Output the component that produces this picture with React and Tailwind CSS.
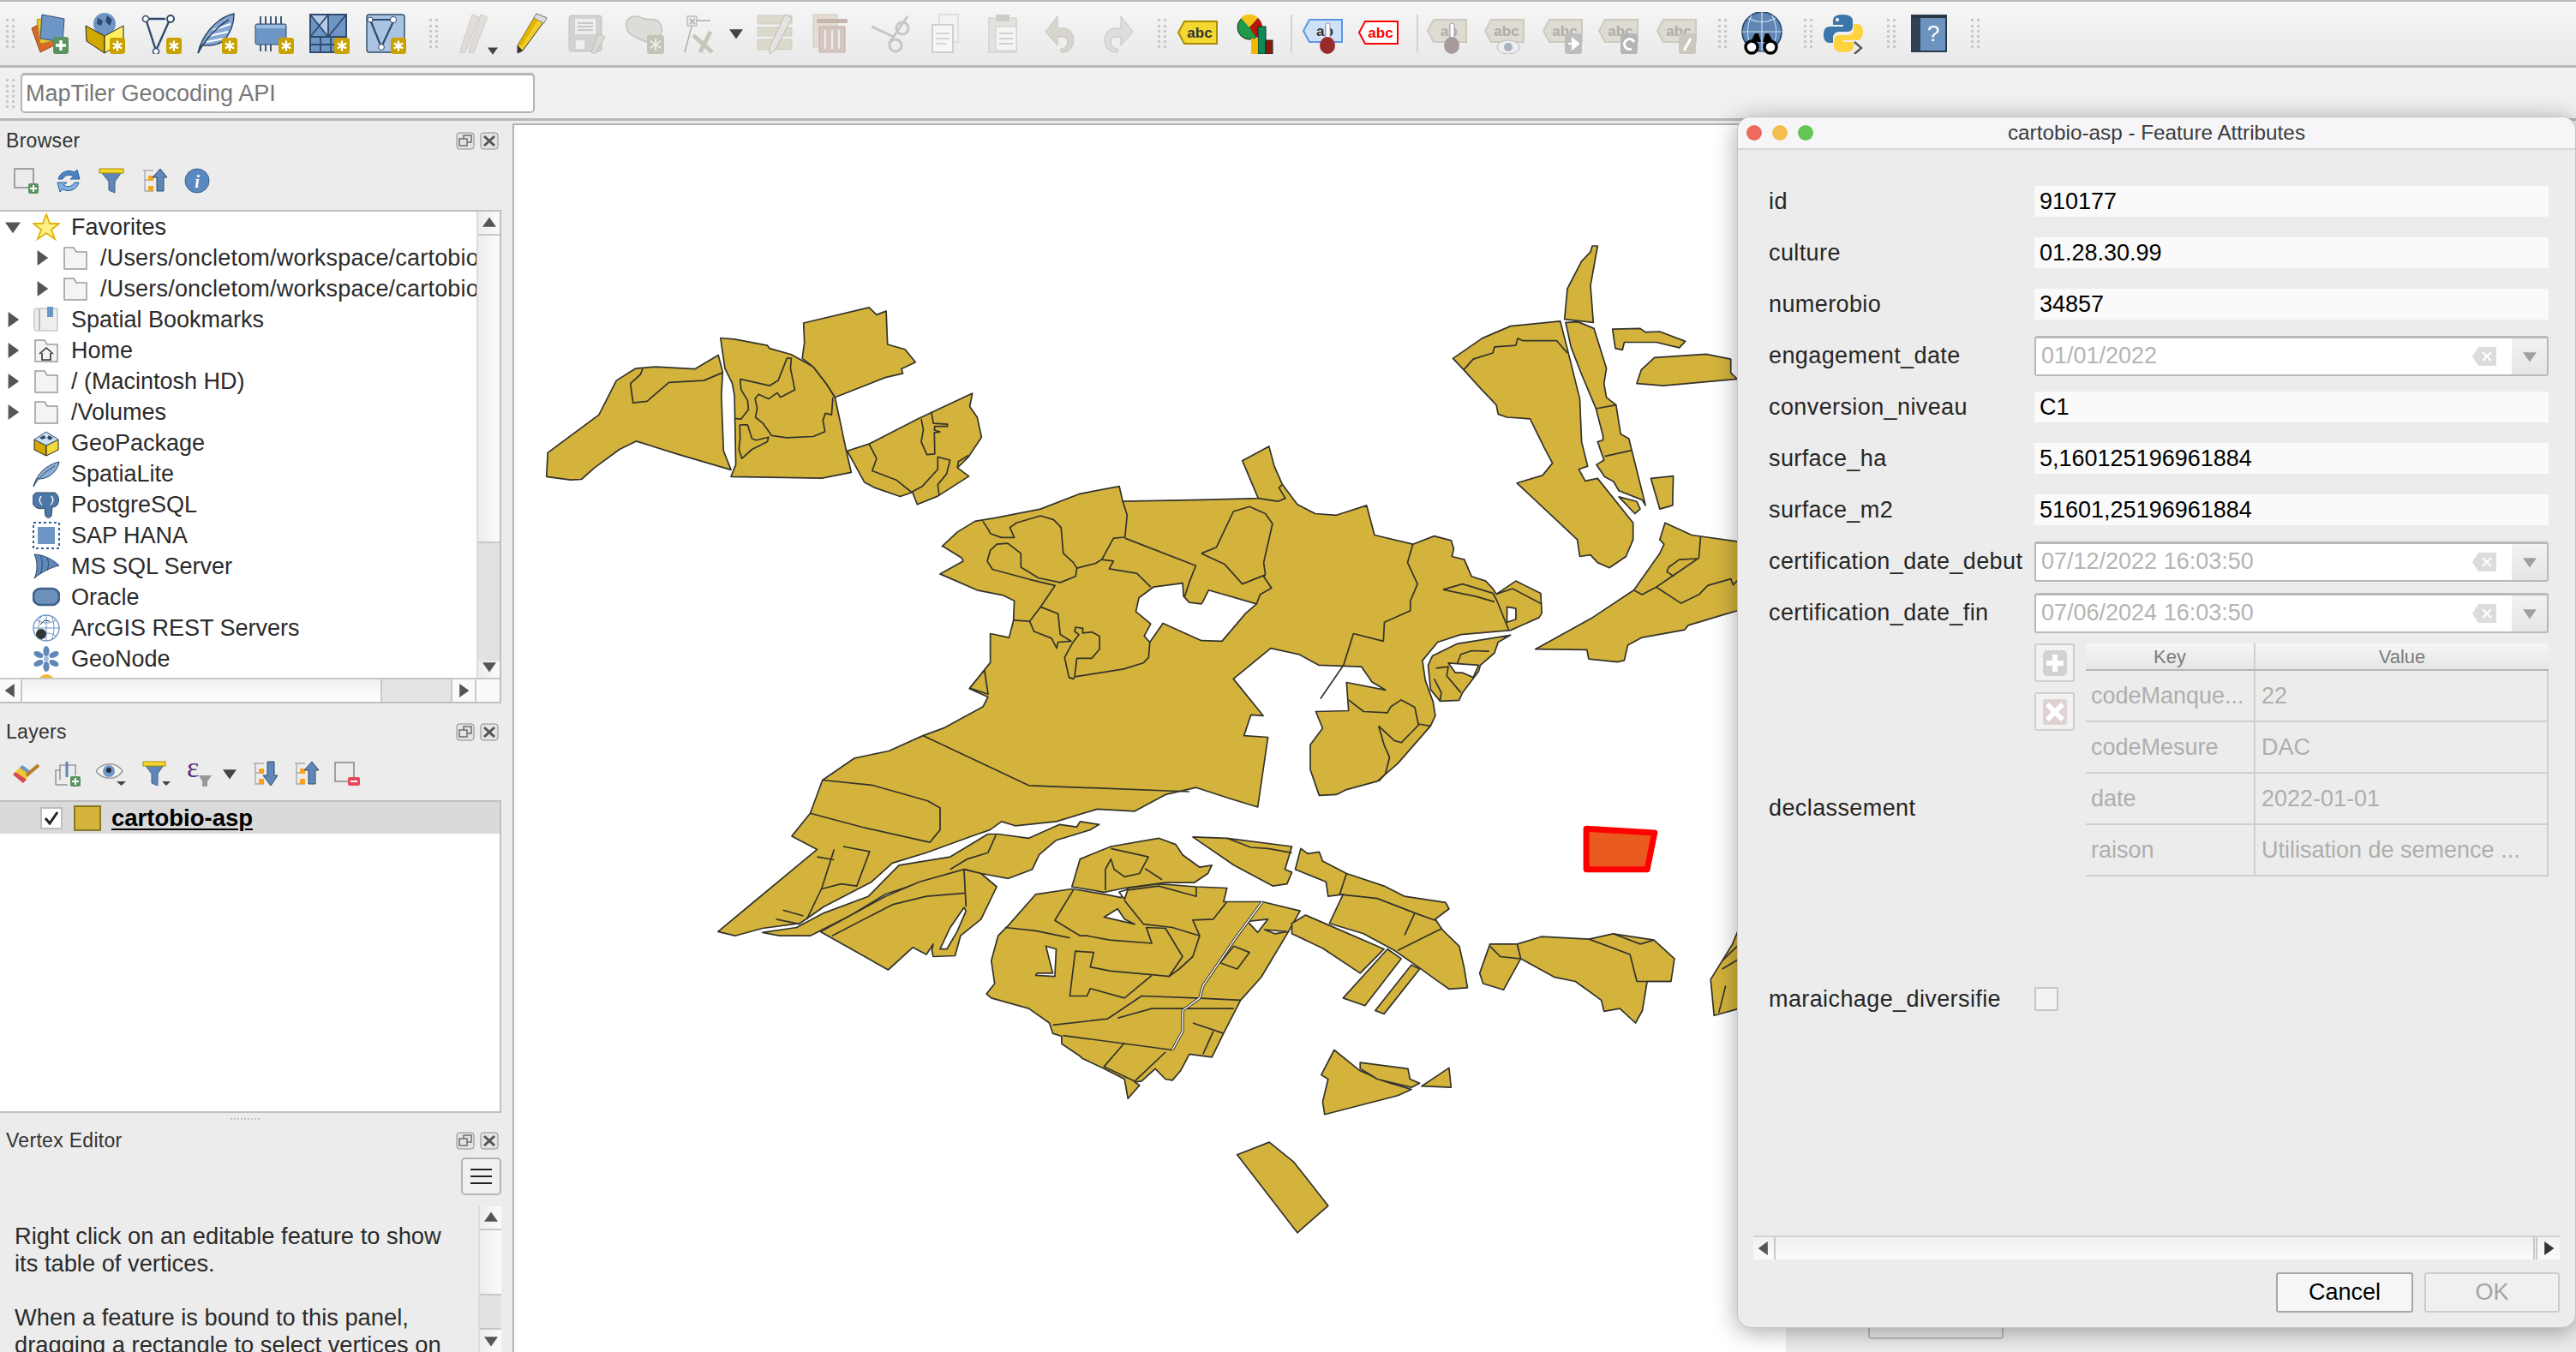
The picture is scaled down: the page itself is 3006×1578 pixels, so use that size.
import React from 'react';

// zoom crops -> page coordinates
const conv = (ox, oy, sx, sy) => (s) =>
  s.trim().split(/\s+/).map((p) => {
    const [x, y] = p.split(',').map(Number);
    return `${(x / sx + ox).toFixed(1)},${(y / sy + oy).toFixed(1)}`;
  }).join(' ');
const Z7 = conv(600, 260, 1.96, 2.8);
const Z8 = conv(800, 780, 1.2544, 2.063);
const Z9 = conv(1400, 260, 2.412, 2.8);

const mainBody = [
  Z7('975,1052 1010,1005 1050,970 1100,958 1200,930 1290,880 1380,856 1388,905'),
  Z9('0,900 160,895 115,772 190,725 205,790 228,850 270,915 320,945 380,950 465,918 487,1015 595,1045 655,1018 703,1033 710,1060 705,1085 740,1095 760,1150 800,1165 820,1190 830,1208 885,1165 955,1205 958,1270 950,1285 870,1326 730,1340 665,1365 622,1425 630,1490 652,1560'),
  Z8('1095,110 1088,135 1040,225 1010,268 965,288 950,300 925,302 912,240 912,180 930,140 920,100 968,98 965,30 1022,48'),
  Z9('480,1495 450,1445 330,1440 275,1405 195,1385 90,1485'),
  Z8('843,110 825,108 815,158 850,162 835,330 795,310 745,283 700,300 655,340 600,335 540,365 480,375 460,365 443,385 425,395 350,440 300,465 270,510 200,570 165,610 110,622 70,640 45,630 100,555 190,432 153,400 180,345 198,265 245,212 295,195 345,158 375,140 433,88 440,65 413,45 435,0'),
  Z7('1080,1535 1038,1515 1085,1432 1085,1337 1128,1350 1138,1295 1140,1230 1115,1212 1055,1195 970,1142 1023,1100 1020,1090 977,1052'),
].join(' ');

const parcels = [
  mainBody,
  Z7('70,824 73,746 190,622 230,510 273,471 320,465 410,472 463,427 473,482 470,560 475,740 492,802 375,753 275,708 237,735 180,795 150,833 125,835'),
  Z7('468,371 500,375 575,395 580,405 630,425 680,465 710,520 730,565 755,735 767,810 700,829 492,824 503,785 500,560 495,520 478,470'),
  Z7('658,322 808,271 825,295 847,283 850,392 890,408 914,450 882,472 885,487 845,500 730,565 710,520 680,465 655,438 660,385'),
  Z7('758,740 808,717 920,635 1044,552 1038,595 1055,630 1065,695 1035,760 1010,795 1036,823 965,888 918,915 907,875 879,889 820,860 797,842'),
  Z9('1022,310 1030,210 1070,120 1095,90 1100,70 1115,70 1095,200 1103,320'),
  Z9('708,438 790,372 870,332 1010,316 1035,430 1065,570 1070,710 1087,790 1062,800 1080,838 1115,830 1215,975 1215,1030 1195,1085 1148,1122 1115,1105 1095,1080 1065,1085 1058,1030 888,845 960,820 988,780 965,730 925,635 860,630 835,620 830,590 785,535 738,475'),
  Z9('1025,320 1060,318 1105,340 1140,470 1133,520 1140,565 1167,590 1180,685 1203,700 1250,918 1240,900 1175,870 1160,840 1135,825 1112,785 1133,770 1115,710 1130,705 1130,690 1110,600 1070,490 1040,400'),
  Z9('1175,890 1225,905 1235,930 1220,945'),
  Z9('1157,342 1235,340 1250,352 1290,350 1362,382 1345,403 1280,385 1190,385 1185,410 1165,405'),
  Z9('1225,520 1238,475 1275,435 1420,424 1490,440 1490,485 1508,505 1300,527'),
  Z9('1265,830 1328,822 1326,918 1290,930'),
  Z9('940,1388 1100,1285 1217,1195 1290,1075 1302,1045 1290,1030 1305,975 1380,1015 1515,1037 1515,1260 1470,1275 1370,1310 1360,1325 1240,1350 1200,1375 1190,1425 1170,1430 1090,1420 1085,1390'),
  Z9('870,1342 720,1370 650,1410 638,1440 645,1520 672,1558 725,1555 735,1530 780,1460 785,1440 825,1400 835,1365'),
  Z8('110,632 160,620 200,585 265,545 310,470 385,450 440,395 455,395 500,405 545,372 570,378 575,365 603,372 590,385 540,410 515,445 505,480 470,502 430,490 405,480 375,495 340,512 290,540 240,590 180,640 135,640'),
  Z8('195,630 240,590 290,545 340,510 405,480 430,490 453,522 430,600 400,640 392,688 360,690 358,675 360,660 350,685 330,668 294,722'),
  Z8('563,522 575,455 620,425 690,405 715,420 725,445 750,475 768,470 762,490 742,512 700,512 640,525 610,535'),
  Z8('510,540 563,527 612,540 635,548 645,525 690,515 745,522 790,525 785,558 842,558 897,580 880,630 840,740 810,795 785,875 768,932 735,925 722,965 710,988 700,985 685,960 665,990 655,992 662,1000 645,1032 640,985 610,960 578,935 575,930 548,900 548,882 535,875 530,850 500,815 445,790 438,780 450,755 445,700 455,640 470,615'),
  Z8('940,610 960,540 938,545 935,510 890,480 898,430 908,442 925,438 930,460 965,490 1020,520 1050,545 1110,560 1115,575 1095,600 1105,625 1130,665 1137,715 1142,765 1115,768 1095,745 1070,715 1035,675 990,635'),
  Z8('885,610 905,590 940,615 1020,672 985,730 930,670 885,635'),
  Z8('960,790 1025,672 1045,695 992,808'),
  Z8('1007,820 1060,710 1072,720 1020,828'),
  Z8('740,402 790,405 885,425 875,480 885,487 878,515 857,520 800,470'),
  Z8('1175,660 1215,660 1220,695 1195,770 1165,755 1160,730'),
  Z8('1215,660 1250,642 1320,648 1355,635 1415,650 1445,695 1440,750 1405,750 1398,820 1388,850 1365,815 1342,822 1338,795 1300,750 1270,740 1220,695'),
  Z8('1503,832 1498,745 1530,660 1540,620 1540,815'),
  Z8('933,1070 930,1040 938,985 928,975 947,915 985,965 1020,990 1060,1010 1040,1025'),
  Z8('985,945 1055,960 1058,985 1072,995 1060,1005 1010,985 985,960'),
  Z8('1075,1002 1115,958 1118,1005'),
  Z8('805,1167 852,1137 888,1185 938,1290 893,1355'),
];

const holes = [
  Z7('1458,1185 1525,1172 1527,1215 1540,1235 1568,1240') + ' ' + Z9('5,1230 20,1195 155,1240 125,1270 58,1362 0,1360') + ' ' + Z7('1480,1303 1450,1365 1437,1345 1452,1305 1418,1265 1425,1220'),
  Z9('695,1433 780,1440 765,1480 735,1465 715,1465'),
  Z9('860,1250 885,1255 885,1290 860,1300'),
  Z8('405,572 385,620 370,672 380,672 395,630 408,580'),
  Z8('525,665 540,672 538,738 510,735 512,730 535,730'),
  Z8('820,605 850,600 835,632'),
  Z8('845,625 878,630 860,635'),
  Z8('610,595 655,612 640,600 630,575'),
  Z8('632,535 645,528 640,552'),
];

const seams = [
  Z7('290,471 285,490 262,520 268,583 300,578 350,516 430,510 473,484'),
  Z7('513,505 580,527 600,510 620,437 630,437 628,470 638,540 605,565 598,550 578,570 555,555 547,570 552,600 548,630 565,650 585,690 620,697 680,693 707,677 702,640 708,617 722,622 725,565'),
  Z7('513,505 515,540 530,575 532,605 515,636 500,634'),
  Z7('512,655 530,655 540,700 550,705 578,695 575,710 540,735 517,765 510,735 513,700 512,655'),
  Z7('808,717 825,765 815,805 870,835 905,875 930,855 965,800 965,760 993,770 985,815 965,850 968,885'),
  Z7('927,635 932,670 927,710 940,752 958,750 957,680 970,678 957,672 958,660 987,660 987,653 955,650 950,612'),
  Z7('1035,755 1012,775 1010,795'),
  Z7('1068,970 1082,1000 1085,1010 1110,1023 1140,1023 1130,990 1145,975 1200,952 1230,965 1247,990 1252,1075 1275,1105 1283,1123 1280,1150 1245,1170 1195,1155 1155,1120 1155,1075 1125,1042 1100,1045 1085,1065 1078,1100 1090,1127 1175,1160 1233,1180 1200,1250 1175,1297 1138,1293'),
  Z7('1283,1123 1325,1108 1340,1095 1367,1025 1393,1022 1398,950 1388,905'),
  Z7('1393,1025 1555,1115 1540,1170 1530,1215'),
  Z7('1340,1095 1367,1100 1357,1125 1420,1140 1452,1185'),
  Z7('1278,1478 1283,1418 1317,1418 1335,1388 1335,1345 1318,1332 1296,1335 1297,1320 1280,1316 1278,1330 1288,1340 1272,1370 1255,1415 1265,1480 1275,1485 1278,1478 1390,1453 1435,1433 1447,1415 1450,1365'),
  Z7('1200,1250 1240,1272 1245,1340 1270,1362 1240,1365 1237,1385 1225,1352 1185,1330 1175,1297'),
  Z9('0,1075 42,1055 90,938 135,922 180,945 200,978 175,1105 180,1145 115,1175 65,1110 0,1075'),
  Z9('180,1145 175,1150 197,1188 165,1210 155,1240'),
  Z9('595,1045 580,1105 608,1175 588,1230 588,1262 515,1300 512,1362 428,1337 400,1440 335,1550'),
  Z9('680,1193 735,1175 820,1205 830,1225 865,1325'),
  Z9('680,1193 740,1208 770,1215 825,1233'),
  Z9('830,1208 875,1190 958,1240'),
  Z9('160,895 215,905 236,895 218,860 228,850'),
  Z9('738,475 765,440 820,420 825,400 885,395 890,372 905,380 1000,380 1030,420'),
  Z9('1110,602 1167,590'),
  Z9('1135,758 1210,738'),
  Z9('1217,1195 1240,1210 1280,1185 1400,1090 1405,1020'),
  Z9('1280,1185 1350,1238 1400,1210 1425,1180 1490,1158 1497,1178 1515,1155'),
  Z9('1395,1092 1345,1095 1315,1120 1310,1135 1330,1150'),
  Z9('720,1435 730,1405 760,1393 810,1395'),
  Z9('660,1450 695,1445 690,1475 730,1530'),
  Z9('655,1485 675,1530 672,1555'),
  Z8('345,158 500,278 735,293'),
  Z8('198,265 270,277 352,315 370,332 370,385 355,415 260,380 180,345'),
  Z8('215,432 197,525 175,600'),
  Z8('228,425 267,437 248,520 225,515 197,527'),
  Z8('190,450 215,457'),
  Z8('140,578 170,592'),
  Z8('130,600 165,612'),
  Z8('968,72 990,100 1025,103 1030,88 1045,72 1065,90 1070,130 1088,135'),
  Z8('1012,135 1020,180 1028,210 1022,250 1012,268'),
  Z8('1012,135 1035,170 1045,175 1072,130'),
  Z8('452,397 440,440 410,455 385,480'),
  Z8('212,640 300,565 350,545 407,537'),
  Z8('405,480 408,570'),
  Z8('620,430 675,450 662,490 640,498 625,480 620,455 612,480 612,530'),
  Z8('670,478 695,505'),
  Z8('465,620 510,628 560,645'),
  Z8('565,530 538,603 575,640 585,640 618,650 680,658 672,620 700,622 725,690 705,738 690,735 620,725 590,715 595,680 568,677 560,785 585,785 590,767 640,790'),
  Z8('640,790 680,735'),
  Z8('750,640 740,690 720,720 705,738'),
  Z8('640,555 668,612 710,620 750,640 740,602 770,600 790,558'),
  Z8('645,530 690,520 745,545 745,522'),
  Z8('535,855 615,840 665,785 745,790 810,795'),
  Z8('630,838 680,815 730,815 800,815'),
  Z8('550,880 710,915'),
  Z8('740,850 785,875'),
  Z8('770,870 755,925'),
  Z8('640,898 610,955 655,990 700,920'),
  Z8('780,705 800,665 823,680 805,720 780,705'),
  Z8('965,490 955,540 1010,550 1065,585 1050,638'),
  Z8('1065,585 1095,603'),
  Z8('1040,675 1105,622'),
  Z8('790,405 825,427 850,430 885,440'),
  Z8('1175,665 1190,690 1218,695'),
  Z8('1320,648 1380,685 1390,750 1440,750'),
  Z8('1355,635 1395,660 1415,650'),
  Z8('1515,720 1540,695'),
  Z8('1520,760 1510,825'),
  Z8('1540,660 1515,700'),
];

const road = Z8('842,558 805,640 755,760 750,790 725,820 725,870 710,915');

const MapCanvas = () => (
  <div className="w-[1486px] mt-[3px] bg-white border-l-2 border-t-2 border-[#b4b4b4] shrink-0 overflow-hidden">
    <svg width="1486" height="1434" viewBox="598 144 1486 1434" className="block">
      <g fill="#d3b33b" stroke="#33322c" strokeWidth="1.7" strokeLinejoin="round">
        {parcels.map((p, i) => <polygon key={i} points={p} />)}
        {holes.map((p, i) => <polygon key={i} points={p} fill="#fff" />)}
        {seams.map((p, i) => <polyline key={i} points={p} fill="none" />)}
        <polyline points={road} fill="none" strokeWidth="3.4" />
        <polyline points={road} fill="none" stroke="#fff" strokeWidth="1.4" />
        <polygon points={Z8('1316,382 1416,392 1405,480 1316,480')} fill="#e95a20" stroke="#ff0000" strokeWidth="7" />
      </g>
    </svg>
  </div>
);

/* ---------- small shapes ---------- */
const Star = ({ x = 30, y = 29 }) => (
  <g transform={`translate(${x} ${y})`}>
    <rect width="18" height="19" rx="3" fill="#c9a200" />
    <path d="M9 3.5v12M3.8 6.5l10.4 6M14.2 6.5l-10.4 6" stroke="#fff" strokeWidth="2.4" />
  </g>
);
const Ico = ({ children, w = 48, h = 48, className = '' }) => (
  <svg width={w} height={h} viewBox={`0 0 ${w} ${h}`} className={`block shrink-0 ${className}`}>{children}</svg>
);
const Tri = ({ dir = 'down', size = 10, color = '#555' }) => {
  const pts = { down: '0,2 10,2 5,9', up: '0,8 10,8 5,1', right: '2,0 9,5 2,10', left: '8,0 1,5 8,10' };
  return (
    <svg width={size} height={size} viewBox="0 0 10 10" className="block shrink-0">
      <polygon points={pts[dir]} fill={color} />
    </svg>
  );
};
const Handle = ({ className = '' }) => (
  <div className={`w-[10px] h-[34px] border-x-[3px] border-dotted border-[#c8c8c8] shrink-0 ${className}`} />
);
const Sep = ({ className = '' }) => <div className={`w-[2px] h-[44px] bg-[#d2d2d2] shrink-0 ${className}`} />;
const Slot = ({ children, className = 'w-[65.5px]' }) => (
  <div className={`flex items-center justify-center shrink-0 relative ${className}`}>{children}</div>
);

/* ---------- main toolbar icons ---------- */
const NewLayer = () => (
  <Ico>
    <polygon points="4,18 22,8 30,38 14,46" fill="#d9682a" stroke="#8a4a20" />
    <polygon points="10,8 30,4 34,32 14,36" fill="#f0c52f" stroke="#a58a20" />
    <polygon points="16,2 42,7 40,34 14,30" fill="#6d96c6" stroke="#35507a" />
    <rect x="29" y="28" width="18" height="20" rx="3" fill="#5a935f" />
    <path d="M38 32v12M32 38h12" stroke="#fff" strokeWidth="3.4" />
  </Ico>
);
const NewGpkg = () => (
  <Ico>
    <circle cx="24" cy="13" r="13" fill="#6f95c4" />
    <path d="M16 6l6 3-2 6-5-2zM27 3l6 5-3 7-5-5z" fill="#2f4a6c" />
    <polygon points="2,15 24,27 24,47 3,33" fill="#d0a800" stroke="#222" />
    <polygon points="46,15 24,27 24,47 46,33" fill="#fdf05e" stroke="#222" />
    <Star />
  </Ico>
);
const NewShape = () => (
  <Ico>
    <path d="M7 10l11 34M34 8L18 44M9 7h20" stroke="#2f4a6c" strokeWidth="2.4" fill="none" />
    <circle cx="6" cy="7" r="3.5" fill="#fff" stroke="#2f4a6c" strokeWidth="1.6" />
    <circle cx="18" cy="45" r="3.5" fill="#fff" stroke="#2f4a6c" strokeWidth="1.6" />
    <circle cx="35" cy="7" r="4" fill="#fff" stroke="#2f4a6c" strokeWidth="2" />
    <Star />
  </Ico>
);
const Feather = () => (
  <Ico>
    <path d="M2 47C6 28 22 6 44 1c0 16-8 30-16 34-8 4-16 3-22 3z" fill="#85a7d2" stroke="#2c4563" strokeWidth="1.4" />
    <path d="M12 34l20-4M15 27l22-5M20 20l20-7" stroke="#fff" strokeWidth="2" />
    <path d="M2 47C10 32 22 18 38 8" stroke="#2c4563" strokeWidth="1.6" fill="none" />
    <Star />
  </Ico>
);
const Memory = () => (
  <Ico>
    <path d="M9 4v10M15 4v10M21 4v10M27 4v10M33 4v10M9 35v10M15 35v10M21 35v10" stroke="#2f4a6c" strokeWidth="1.8" />
    <rect x="3" y="13" width="36" height="24" rx="2" fill="#6d96c6" stroke="#2f4a6c" />
    <rect x="4" y="14" width="34" height="4" fill="#9bbbdf" />
    <Star />
  </Ico>
);
const Grid = () => (
  <Ico>
    <rect x="2" y="2" width="42" height="44" fill="#6d96c6" stroke="#2f4a6c" strokeWidth="2" />
    <path d="M3 3h19v24z" fill="#b6cce6" />
    <path d="M2 28h42M23 2v26M2 37h32M14 28v18M26 28v18M2 2l21 26M23 2L2 28M23 28L44 2" stroke="#2f4a6c" strokeWidth="1.8" fill="none" />
    <Star />
  </Ico>
);
const Vector = () => (
  <Ico>
    <rect x="2" y="2" width="44" height="44" rx="3" fill="#a9c3e2" stroke="#2f4a6c" strokeWidth="1.4" />
    <path d="M6 8l13 32M34 8L19 40M8 8h24" stroke="#2f4a6c" strokeWidth="2.2" fill="none" />
    <circle cx="6" cy="8" r="3" fill="#fff" stroke="#2f4a6c" />
    <circle cx="19" cy="40" r="3.4" fill="#fff" stroke="#2f4a6c" />
    <circle cx="33" cy="8" r="3.6" fill="#fff" stroke="#2f4a6c" />
    <Star />
  </Ico>
);
const GreyPencils = () => (
  <Ico>
    <g opacity=".6" fill="#d6d0ca" stroke="#bdb7b0">
      <polygon points="20,2 28,5 12,46 6,47 8,38" />
      <polygon points="30,2 38,5 22,46 16,47 18,38" />
    </g>
  </Ico>
);
const Pencil = () => (
  <Ico>
    <polygon points="30,1 42,6 14,44 8,47 8,38" fill="#f1cd2d" stroke="#333" />
    <polygon points="30,1 35,3 13,38 8,38" fill="#e2b400" />
    <polygon points="30,1 42,6 39,12 27,6" fill="#ddd" stroke="#888" />
    <polygon points="8,38 14,44 8,47" fill="#333" />
  </Ico>
);
const GreySave = () => (
  <Ico>
    <rect x="2" y="3" width="38" height="42" rx="3" fill="#d2d2d0" stroke="#c0c0be" />
    <rect x="9" y="7" width="24" height="18" fill="#eee" />
    <path d="M12 12h18M12 16h18M12 20h18" stroke="#bbb" strokeWidth="1.5" />
    <rect x="10" y="32" width="10" height="10" fill="#f0f0f0" />
    <polygon points="36,24 44,28 32,48 28,46" fill="#dcd8d2" stroke="#c0bcb6" />
  </Ico>
);
const GreyBlob = () => (
  <Ico>
    <path d="M2 14C2 4 12 2 20 6s18-2 22 8-2 12-4 18-14 2-22-2S2 24 2 14z" fill="#dcdcd8" stroke="#c4c4c0" strokeWidth="1.6" />
    <rect x="26" y="26" width="20" height="22" rx="3" fill="#c6c2b6" />
    <path d="M36 30v14M30 33l12 8M42 33l-12 8" stroke="#eee" strokeWidth="1.8" />
  </Ico>
);
const GreyTools = () => (
  <Ico>
    <rect x="5" y="4" width="11" height="11" fill="#e8e8e8" stroke="#aaa" />
    <path d="M8 7l6 6M14 7l-6 6M16 9h16M10 16L2 46" stroke="#aaa" strokeWidth="1.4" />
    <path d="M12 26l22 20M32 22L20 46" stroke="#c9c5ba" strokeWidth="5" />
  </Ico>
);
const GreyRows = () => (
  <Ico>
    <path d="M4 3h40v10H4zM4 17h40v10H4zM4 31h40v12H4z" fill="#dbd8cc" stroke="#d0cdc0" />
    <polygon points="36,2 44,6 24,44 18,48 18,40" fill="#e5e3df" stroke="#bbb" />
  </Ico>
);
const GreyTrash = () => (
  <Ico>
    <rect x="2" y="2" width="28" height="38" fill="#e2dcd2" stroke="#cfc8bc" />
    <rect x="6" y="7" width="36" height="5" fill="#c5b6ae" />
    <rect x="9" y="16" width="30" height="30" fill="#d6c6c0" stroke="#bdaea8" />
    <path d="M16 20v22M24 20v22M32 20v22" stroke="#eee" strokeWidth="2" />
  </Ico>
);
const GreyScissors = () => (
  <Ico>
    <path d="M2 16l26 12M44 4L22 36" stroke="#c6c6c6" strokeWidth="3" />
    <circle cx="38" cy="18" r="7" fill="none" stroke="#c6c6c6" strokeWidth="3" />
    <circle cx="30" cy="38" r="7" fill="none" stroke="#c6c6c6" strokeWidth="3" />
  </Ico>
);
const GreyCopy = () => (
  <Ico>
    <rect x="14" y="2" width="22" height="32" fill="#f2f2f2" stroke="#d8d8d8" strokeWidth="1.5" />
    <rect x="6" y="14" width="24" height="32" fill="#f6f6f6" stroke="#c4c4c4" strokeWidth="1.5" />
    <path d="M10 24h16M10 30h16M10 36h12" stroke="#ccc" strokeWidth="1.6" />
  </Ico>
);
const GreyPaste = () => (
  <Ico>
    <rect x="6" y="6" width="32" height="40" fill="#e4e2dc" stroke="#c8c8c4" />
    <rect x="14" y="2" width="16" height="8" fill="#ccc" />
    <rect x="14" y="16" width="24" height="28" fill="#f5f5f5" stroke="#ccc" />
    <path d="M18 24h16M18 30h16M18 36h16" stroke="#c4c4c4" strokeWidth="1.6" />
  </Ico>
);
const Undo = ({ flip = false }) => (
  <Ico>
    <g transform={flip ? 'translate(48 0) scale(-1 1)' : ''}>
      <path d="M20 4L6 22l14 16V28h6c8 0 8 14-2 14v4c18 2 20-26 4-28h-8z" fill={flip ? '#dcdedc' : '#d8d4ce'} stroke="#c6c2bc" />
    </g>
  </Ico>
);
const AbcTag = ({ fill = '#f4d832', stroke = '#a88d00', ink = '#333', text = 'abc', grey }) => (
  <>
    <polygon points="8,2 46,2 46,28 8,28 1,15" fill={fill} stroke={stroke} strokeWidth="2" />
    <text x="26" y="21" textAnchor="middle" fontSize="17" fontWeight="700" fill={ink} fontFamily="Liberation Sans" opacity={grey ? 0.7 : 1}>{text}</text>
  </>
);
const LabelYellow = () => <Ico><g transform="translate(0 8)"><AbcTag /></g></Ico>;
const Diagrams = () => (
  <Ico>
    <circle cx="15" cy="17" r="14" fill="#1f9a4a" stroke="#222" />
    <path d="M15 17L5 6a14 14 0 0 1 20 0z" fill="#f4c21a" />
    <path d="M15 17L25 6a14 14 0 0 1-2 23z" fill="#b3180c" />
    <rect x="25" y="16" width="9" height="32" fill="#0f8a55" stroke="#222" />
    <rect x="17" y="30" width="8" height="18" fill="#f2b800" />
    <rect x="34" y="32" width="8" height="16" fill="#8a1a0c" stroke="#222" />
  </Ico>
);
const Pin = ({ tone = '#9b2a2a' }) => (
  <>
    <rect x="27" y="12" width="5" height="20" rx="2" fill="#fff" stroke="#999" />
    <ellipse cx="29" cy="38" rx="9" ry="10" fill={tone} />
  </>
);
const LabelPin = () => (
  <Ico><g transform="translate(0 6)"><AbcTag fill="#cfe1f7" stroke="#5b96e8" text="ab" /></g><Pin /></Ico>
);
const LabelRed = () => <Ico><g transform="translate(0 8)"><AbcTag fill="#fff" stroke="#f00" ink="#f00" /></g></Ico>;
const GreyTag = ({ text = 'abc', children }) => (
  <Ico><g transform="translate(0 6)"><AbcTag fill="#dedbd2" stroke="#cdcabf" ink="#999" text={text} grey /></g>{children}</Ico>
);
const GlobeFind = () => (
  <Ico w={52} h={50}>
    <circle cx="26" cy="23" r="23" fill="#5f86b5" stroke="#24456e" strokeWidth="1.6" />
    <path d="M3 23h46M26 0v46M10 7c10 6 22 6 32 0M10 39c10-6 22-6 32 0M14 4c-6 12-6 26 0 38M38 4c6 12 6 26 0 38" stroke="#cfdff0" strokeWidth="1.2" fill="none" />
    <circle cx="14" cy="41" r="7" fill="#fff" stroke="#000" strokeWidth="3.4" />
    <circle cx="36" cy="41" r="7" fill="#fff" stroke="#000" strokeWidth="3.4" />
    <path d="M14 33l4-8h4l3 10h2l3-10h4l4 8-8 2H22z" fill="#000" />
  </Ico>
);
const Python = () => (
  <Ico>
    <path d="M22 2c-8 0-11 3-11 7v5h12v2H7c-5 0-7 4-7 10s3 9 7 9h4v-6c0-4 3-7 7-7h10c4 0 6-3 6-6V9c0-4-4-7-12-7z" fill="#3b76a8" />
    <circle cx="16" cy="8" r="2" fill="#fff" />
    <path d="M24 46c8 0 11-3 11-7v-5H23v-2h16c5 0 7-4 7-10s-3-9-7-9h-4v6c0 4-3 7-7 7H18c-4 0-6 3-6 6v7c0 4 4 7 12 7z" fill="#fdd33f" />
    <path d="M36 34l8 7-8 7" stroke="#555" strokeWidth="2.4" fill="none" />
  </Ico>
);
const Help = () => (
  <Ico w={42} h={44}>
    <rect x="1" y="1" width="40" height="42" fill="#6c93bf" stroke="#2a3b4d" strokeWidth="2" />
    <rect x="1" y="1" width="10" height="42" fill="#2f4256" />
    <rect x="1" y="1" width="40" height="3" fill="#2a3442" />
    <text x="26" y="31" textAnchor="middle" fontSize="26" fill="#fff" fontFamily="Liberation Sans">?</text>
  </Ico>
);

const MainToolbar = () => (
  <div className="h-[79px] shrink-0 flex items-center pl-[7px] border-t-2 border-b-[3px] border-[#b8b8b8] bg-linear-to-b from-[#f6f6f6] to-[#e9e9e9]">
    <Handle />
    <div className="flex w-[7px] shrink-0" />
    <Slot><NewLayer /></Slot><Slot><NewGpkg /></Slot><Slot><NewShape /></Slot><Slot><Feather /></Slot><Slot><Memory /></Slot><Slot><Grid /></Slot><Slot><Vector /></Slot>
    <Handle className="ml-[18px] mr-[12px]" />
    <Slot className="w-[65px]"><GreyPencils /><div className="absolute left-[46px] top-[38px]"><Tri color="#444" size={12} /></div></Slot>
    <Slot><Pencil /></Slot>
    <Slot className="w-[66px]"><GreySave /></Slot>
    <Slot className="w-[68px]"><GreyBlob /></Slot>
    <Slot className="w-[84px] justify-start pl-[10px] gap-[6px]"><GreyTools /><Tri color="#444" size={16} /></Slot>
    <Slot className="w-[66px]"><GreyRows /></Slot>
    <Slot className="w-[67px]"><GreyTrash /></Slot>
    <Slot className="w-[69px]"><GreyScissors /></Slot>
    <Slot className="w-[65px]"><GreyCopy /></Slot>
    <Slot className="w-[67px]"><GreyPaste /></Slot>
    <Slot className="w-[66px]"><Undo /></Slot>
    <Slot className="w-[66px]"><Undo flip /></Slot>
    <Handle className="ml-[14px] mr-[7px]" />
    <Slot className="w-[60px]"><LabelYellow /></Slot>
    <Slot className="w-[78px]"><Diagrams /></Slot>
    <Sep className="mr-[4px]" />
    <Slot className="w-[64px]"><LabelPin /></Slot>
    <Slot className="w-[66px]"><LabelRed /></Slot>
    <Sep className="ml-[11px] mr-[1px]" />
    <Slot className="w-[65px]"><GreyTag text="ab"><Pin tone="#a69a9a" /></GreyTag></Slot>
    <Slot className="w-[70px]"><GreyTag><ellipse cx="28" cy="40" rx="13" ry="8" fill="#eee" stroke="#bbb" /><circle cx="28" cy="40" r="5" fill="#a9b4c0" /></GreyTag></Slot>
    <Slot className="w-[65px]"><GreyTag><rect x="26" y="24" width="20" height="24" rx="3" fill="#bdbdbd" /><path d="M30 36h8M35 30l7 6-7 6z" fill="#fff" stroke="#fff" strokeWidth="2" /></GreyTag></Slot>
    <Slot className="w-[65px]"><GreyTag><rect x="26" y="24" width="20" height="24" rx="3" fill="#b5b5b5" /><path d="M42 34a6 6 0 1 0-3 8" stroke="#fff" strokeWidth="3" fill="none" /></GreyTag></Slot>
    <Slot className="w-[72px]"><GreyTag><rect x="26" y="24" width="20" height="24" rx="3" fill="#cbc8bd" /><path d="M32 44l8-14" stroke="#fff" strokeWidth="3" /></GreyTag></Slot>
    <Handle className="ml-[12px] mr-[11px]" />
    <Slot className="w-[60px]"><GlobeFind /></Slot>
    <Handle className="ml-[19px] mr-[11px]" />
    <Slot className="w-[52px]"><Python /></Slot>
    <Handle className="ml-[24px] mr-[9px]" />
    <Slot className="w-[60px]"><Help /></Slot>
    <Handle className="ml-[19px]" />
  </div>
);

const SearchBar = () => (
  <div className="h-[62px] shrink-0 flex items-center pl-[7px] border-b-[3px] border-[#b8b8b8] bg-[#f0f0f0]">
    <Handle />
    <div className="ml-[7px] w-[600px] h-[47px] bg-white rounded-[5px] border-2 border-t-[3px] border-[#b4b4b4] flex items-center pl-[4px] text-[27px] text-[#777]">
      MapTiler Geocoding API
    </div>
  </div>
);

/* ---------- docks ---------- */
const DockButtons = () => (
  <div className="flex gap-[6px]">
    <svg width="22" height="21" viewBox="0 0 22 21" className="block">
      <rect x="1" y="1" width="20" height="19" rx="3" fill="#e4e4e4" stroke="#8c8c8c" />
      <rect x="9" y="4" width="9" height="8" fill="none" stroke="#666" strokeWidth="1.4" />
      <rect x="4" y="8" width="9" height="8" fill="#e4e4e4" stroke="#666" strokeWidth="1.4" />
    </svg>
    <svg width="22" height="21" viewBox="0 0 22 21" className="block">
      <rect x="1" y="1" width="20" height="19" rx="3" fill="#e4e4e4" stroke="#8c8c8c" />
      <path d="M5 5l12 11M17 5L5 16" stroke="#555" strokeWidth="3" />
    </svg>
  </div>
);
const DockTitle = ({ title, className = '' }) => (
  <div className={`flex items-center justify-between pl-[7px] pr-[3px] text-[23px] tracking-[0.3px] text-[#333] ${className}`}>
    <span>{title}</span><DockButtons />
  </div>
);
const VBar = ({ thumbTop, thumbH }) => (
  <div className="relative w-[27px] shrink-0 flex flex-col border-l-2 border-[#dcdcdc] bg-linear-to-r from-[#ededed] to-[#fbfbfb]">
    <div className="h-[28px] flex items-center justify-center border-b-2 border-[#c8c8c8]"><Tri dir="up" size={16} /></div>
    <div className="flex-1" />
    <div className="h-[28px] flex items-center justify-center border-t-2 border-[#c8c8c8]"><Tri dir="down" size={16} /></div>
    <div className={`absolute left-0 right-0 bg-[#e2e2e2] border-t-2 border-[#c8c8c8] ${thumbTop} ${thumbH}`} />
  </div>
);

const TreeRow = ({ arrow, icon, label, child }) => (
  <div className={`h-[36px] flex items-center whitespace-nowrap shrink-0 ${child ? 'pl-[38px] tracking-[0.2px]' : 'pl-[4px]'}`}>
    <div className="w-[34px] shrink-0 flex items-center pl-[2px]">
      {arrow && <Tri dir={arrow} size={18} color="#555" />}
    </div>
    <div className="w-[32px] h-[32px] shrink-0 flex items-center justify-center">{icon}</div>
    <span className="ml-[13px]">{label}</span>
  </div>
);
const S32 = ({ children }) => <svg width="32" height="32" viewBox="0 0 32 32" className="block">{children}</svg>;
const FolderIco = ({ children }) => (
  <S32>
    <path d="M3 4h11l3 5h12v20H3z" fill="#f4f4f2" stroke="#9a9a9a" strokeWidth="1.5" />
    {children}
  </S32>
);
const StarIco = () => <S32><polygon points="16,1 20,12 31,12 22,19 26,30 16,23 6,30 10,19 1,12 12,12" fill="#fff08a" stroke="#e0b400" strokeWidth="1.8" /></S32>;
const BookmarkIco = () => (
  <S32>
    <path d="M5 3h24v26H5c-2 0-3-1-3-2V5c0-1 1-2 3-2z" fill="#eee" stroke="#b0b0b0" />
    <rect x="17" y="1" width="7" height="12" fill="#6d96c6" />
    <path d="M8 4v24" stroke="#bbb" strokeWidth="2" />
  </S32>
);
const HomeIco = () => <FolderIco><path d="M8 20l8-7 8 7M11 19v8h10v-8" fill="none" stroke="#333" strokeWidth="1.6" /></FolderIco>;
const GpkgIco = () => (
  <S32>
    <polygon points="2,12 16,19 16,31 2,24" fill="#d0a800" stroke="#222" />
    <polygon points="30,12 16,19 16,31 30,24" fill="#f4da3a" stroke="#222" />
    <polygon points="2,12 16,3 30,12 16,19" fill="#cfe0f1" stroke="#2f4a6c" />
    <path d="M8 10l5-3 3 3-5 2zM19 7l5 3-4 3-3-3z" fill="#2f4a6c" />
  </S32>
);
const FeatherSm = () => (
  <S32>
    <path d="M1 31C4 18 14 6 31 2c-1 8-7 14-12 17-6 3-10 3-14 3z" fill="#8bacd4" stroke="#2c4563" />
    <path d="M1 31C7 21 15 13 26 7" stroke="#2c4563" fill="none" />
  </S32>
);
const Elephant = () => (
  <S32>
    <path d="M4 2h22c4 2 6 8 3 14-2 3-6 3-6 3l-1 10c-1 3-6 3-7 0l-1-9c-6 2-12 0-14-6C-1 9 0 4 4 2z" fill="#4d77a6" stroke="#2c4563" />
    <path d="M10 6c-3 4-2 8 1 10M22 6c3 4 2 8-1 10" stroke="#fff" strokeWidth="1.4" fill="none" />
  </S32>
);
const SapIco = () => (
  <S32>
    <rect x="1" y="1" width="30" height="30" fill="none" stroke="#2f5f95" strokeWidth="2" strokeDasharray="3 3" />
    <rect x="6" y="6" width="20" height="20" fill="#6d96c6" />
  </S32>
);
const SailIco = () => (
  <S32>
    <path d="M2 2c10 0 22 6 29 13-8 2-20 7-29 15 4-8 4-20 0-28z" fill="#5f88b8" stroke="#2f4a6c" />
    <path d="M9 3c3 7 3 15 0 22M17 6c2 5 2 10 0 15" stroke="#2f4a6c" fill="none" />
  </S32>
);
const OracleIco = () => <S32><rect x="1" y="6" width="30" height="19" rx="8" fill="#6d90bc" stroke="#3d5f88" strokeWidth="2.6" /></S32>;
const ArcIco = () => (
  <S32>
    <circle cx="16" cy="16" r="15" fill="#fff" stroke="#6d96c6" strokeWidth="1.4" />
    <path d="M1 16h30M16 1v30M5 7c7 4 15 4 22 0M5 25c7-4 15-4 22 0M10 2c-4 9-4 19 0 28M22 2c4 9 4 19 0 28" stroke="#6d96c6" fill="none" />
    <circle cx="10" cy="23" r="6" fill="#333" />
    <path d="M9 12l5-5 6 1" stroke="#333" fill="none" />
  </S32>
);
const GeoNodeIco = () => (
  <S32>
    <g fill="#5f88b8">
      <ellipse cx="16" cy="7" rx="3.6" ry="6" /><ellipse cx="16" cy="25" rx="3.6" ry="6" />
      <ellipse cx="7" cy="11" rx="6" ry="3.4" transform="rotate(25 7 11)" /><ellipse cx="25" cy="11" rx="6" ry="3.4" transform="rotate(-25 25 11)" />
      <ellipse cx="7" cy="21" rx="6" ry="3.4" transform="rotate(-25 7 21)" /><ellipse cx="25" cy="21" rx="6" ry="3.4" transform="rotate(25 25 21)" />
    </g>
    <circle cx="16" cy="16" r="3" fill="#9dbbdc" />
  </S32>
);

function TreeArrow({ dir }) {
  return (
    <svg width="30" height="30" viewBox="0 0 30 30" className="block">
      <path d="M2 3h12M4 3v24h10M4 14h10" stroke="#aaa" strokeWidth="1.4" fill="none" />
      <rect x="8" y="9" width="6" height="6" fill="#f6a21c" />
      <rect x="8" y="21" width="6" height="6" fill="#f6a21c" />
      {dir === 'up'
        ? <polygon points="22,1 30,11 26,11 26,27 18,27 18,11 13,11" fill="#5f88b8" stroke="#2f4a6c" />
        : <polygon points="22,29 30,17 26,17 26,1 18,1 18,17 13,17" fill="#5f88b8" stroke="#2f4a6c" />}
    </svg>
  );
}

const BrowserPanel = () => (
  <div className="h-[695px] shrink-0 flex flex-col">
    <DockTitle title="Browser" className="h-[46px] shrink-0" />
    <div className="h-[58px] shrink-0 flex items-center gap-[20px] pl-[15px] pb-[10px]">
      <svg width="30" height="30" viewBox="0 0 30 30" className="block">
        <rect x="2" y="1" width="22" height="22" fill="none" stroke="#8e8e8e" strokeWidth="1.6" />
        <rect x="18" y="18" width="12" height="12" rx="2" fill="#5a935f" />
        <path d="M24 20v8M20 24h8" stroke="#fff" strokeWidth="2" />
      </svg>
      <svg width="30" height="30" viewBox="0 0 30 30" className="block">
        <path d="M3 13C5 5 14 1 22 5l3-3 3 11H17l4-3c-5-3-10-2-13 3z" fill="#4a86c6" stroke="#2f5f95" />
        <path d="M27 17c-2 8-11 12-19 8l-3 3-3-11h11l-4 3c5 3 10 2 13-3z" fill="#7fb0e0" stroke="#2f5f95" />
      </svg>
      <svg width="30" height="30" viewBox="0 0 30 30" className="block">
        <polygon points="1,2 29,2 19,16 19,29 12,26 12,16" fill="#5f88b8" stroke="#3d5f88" />
        <rect x="1" y="1" width="28" height="5" fill="#f4d832" stroke="#a88d00" />
      </svg>
      <TreeArrow dir="up" />
      <svg width="30" height="30" viewBox="0 0 30 30" className="block">
        <circle cx="15" cy="15" r="14" fill="#5a88c0" stroke="#3d5f88" />
        <text x="15" y="23" textAnchor="middle" fontSize="20" fontStyle="italic" fontWeight="700" fill="#fff" fontFamily="Liberation Serif">i</text>
      </svg>
    </div>
    <div className="h-[576px] shrink-0 flex flex-col bg-white border-t-2 border-r-2 border-b-2 border-[#c0c0c0]">
      <div className="flex flex-1 min-h-0">
        <div className="flex-1 min-w-0 overflow-hidden text-[27px] text-[#2b2b2b] flex flex-col">
          <TreeRow arrow="down" icon={<StarIco />} label="Favorites" />
          <TreeRow child arrow="right" icon={<FolderIco />} label="/Users/oncletom/workspace/cartobio-asp" />
          <TreeRow child arrow="right" icon={<FolderIco />} label="/Users/oncletom/workspace/cartobio-web" />
          <TreeRow arrow="right" icon={<BookmarkIco />} label="Spatial Bookmarks" />
          <TreeRow arrow="right" icon={<HomeIco />} label="Home" />
          <TreeRow arrow="right" icon={<FolderIco />} label="/ (Macintosh HD)" />
          <TreeRow arrow="right" icon={<FolderIco />} label="/Volumes" />
          <TreeRow icon={<GpkgIco />} label="GeoPackage" />
          <TreeRow icon={<FeatherSm />} label="SpatiaLite" />
          <TreeRow icon={<Elephant />} label="PostgreSQL" />
          <TreeRow icon={<SapIco />} label="SAP HANA" />
          <TreeRow icon={<SailIco />} label="MS SQL Server" />
          <TreeRow icon={<OracleIco />} label="Oracle" />
          <TreeRow icon={<ArcIco />} label="ArcGIS REST Servers" />
          <TreeRow icon={<GeoNodeIco />} label="GeoNode" />
          <div className="pl-[38px] shrink-0"><div className="w-[32px] h-[32px] flex justify-center"><div className="w-[20px] h-[20px] rounded-full bg-[#f2b632]" /></div></div>
        </div>
        <VBar thumbTop="top-[385px]" thumbH="h-[140px]" />
      </div>
      <div className="h-[28px] shrink-0 flex items-stretch border-t-2 border-[#c8c8c8] bg-[#fafafa]">
        <div className="w-[26px] flex items-center justify-center border-r-2 border-[#c8c8c8]"><Tri dir="left" size={16} /></div>
        <div className="w-[418px] bg-linear-to-b from-[#f0f0f0] to-white" />
        <div className="w-[84px] bg-[#e4e4e4] border-x-2 border-[#c8c8c8]" />
        <div className="w-[28px] flex items-center justify-center border-r-2 border-[#c8c8c8]"><Tri dir="right" size={16} /></div>
      </div>
    </div>
  </div>
);

const Splitter = ({ className = '' }) => (
  <div className={`shrink-0 flex items-center justify-center pr-[14px] ${className}`}>
    <div className="w-[34px] border-t-2 border-dotted border-[#c4c4c4]" />
  </div>
);

const LayersPanel = () => (
  <div className="flex flex-col shrink-0">
    <DockTitle title="Layers" className="h-[36px] shrink-0" />
    <div className="h-[62px] shrink-0 flex items-center gap-[18px] pl-[15px]">
      <svg width="31" height="30" viewBox="0 0 31 30" className="block">
        <polygon points="0,16 11,5 22,13 12,26" fill="#f0c62f" />
        <polygon points="0,16 12,26 16,22 3,13" fill="#d9485a" />
        <polygon points="8,8 11,5 22,13 19,16" fill="#6d96c6" />
        <path d="M16 17L30 5" stroke="#b57d2a" strokeWidth="4" />
      </svg>
      <svg width="30" height="30" viewBox="0 0 30 30" className="block">
        <path d="M1 28V11h5M6 22V5h18v12" fill="none" stroke="#999" strokeWidth="1.6" />
        <path d="M14 1v18" stroke="#5f88b8" strokeWidth="3" />
        <path d="M1 28h14" stroke="#999" strokeWidth="1.6" />
        <rect x="18" y="18" width="12" height="12" rx="2" fill="#5a935f" />
        <path d="M24 20v8M20 24h8" stroke="#fff" strokeWidth="2" />
      </svg>
      <svg width="36" height="30" viewBox="0 0 36 30" className="block">
        <path d="M0 12C8 1 24 1 31 12 24 23 8 23 0 12z" fill="#f4f4f4" stroke="#999" strokeWidth="1.5" />
        <circle cx="15" cy="12" r="7" fill="#6d96c6" />
        <circle cx="15" cy="11" r="3" fill="#1d2c40" />
        <polygon points="24,24 35,24 29.5,29" fill="#444" />
      </svg>
      <svg width="34" height="30" viewBox="0 0 34 30" className="block">
        <polygon points="1,2 27,2 18,15 18,29 11,26 11,15" fill="#5f88b8" stroke="#3d5f88" />
        <rect x="1" y="1" width="26" height="5" fill="#f4d832" stroke="#a88d00" />
        <polygon points="23,24 33,24 28,29" fill="#444" />
      </svg>
      <div className="flex items-center gap-[12px]">
        <svg width="30" height="30" viewBox="0 0 30 30" className="block">
          <text x="0" y="19" fontSize="34" fill="#5c2c7a" fontFamily="Liberation Serif">ε</text>
          <polygon points="14,17 29,17 24,24 24,30 18,30 18,24" fill="#999" />
        </svg>
        <Tri dir="down" size={16} color="#444" />
      </div>
      <TreeArrow dir="down" />
      <TreeArrow dir="up" />
      <svg width="30" height="30" viewBox="0 0 30 30" className="block">
        <rect x="1" y="2" width="22" height="22" fill="none" stroke="#8e8e8e" strokeWidth="1.6" />
        <rect x="16" y="19" width="14" height="10" rx="2" fill="#e8485a" />
        <rect x="19" y="23" width="8" height="2" fill="#fff" />
      </svg>
    </div>
    <div className="h-[365px] bg-white border-t-2 border-r-2 border-b-2 border-[#c0c0c0]">
      <div className="h-[37px] bg-[#dadada] flex items-center pl-[47px]">
        <div className="w-[26px] h-[26px] bg-white border-2 border-[#bdbdbd] flex items-center justify-center">
          <svg width="18" height="16" viewBox="0 0 18 16" className="block"><path d="M2 8l5 6L16 1" fill="none" stroke="#222" strokeWidth="3" /></svg>
        </div>
        <div className="ml-[13px] w-[32px] h-[30px] bg-[#d3b33b] border-2 border-[#8b7628]" />
        <span className="ml-[12px] text-[27.5px] font-bold underline decoration-2 underline-offset-[3px] text-black">cartobio-asp</span>
      </div>
    </div>
  </div>
);

const VertexPanel = () => (
  <div className="flex-1 min-h-0 flex flex-col">
    <DockTitle title="Vertex Editor" className="h-[36px] shrink-0" />
    <div className="h-[49px] shrink-0 flex justify-end items-start pt-[2px]">
      <div className="w-[47px] h-[44px] rounded-[5px] border-2 border-[#b4b4b4] bg-[#f0f0f0] flex flex-col items-center justify-center gap-[6px]">
        <div className="w-[25px] h-[2px] bg-[#222]" /><div className="w-[25px] h-[2px] bg-[#222]" /><div className="w-[25px] h-[2px] bg-[#222]" />
      </div>
    </div>
    <div className="flex-1 min-h-0 flex mt-[10px] overflow-hidden">
      <div className="flex-1 pl-[17px] pr-[4px] pt-[19px] text-[27.3px] leading-[32px] text-[#2b2b2b]">
        <p className="whitespace-nowrap">Right click on an editable feature to show</p>
        <p className="whitespace-nowrap">its table of vertices.</p>
        <p className="whitespace-nowrap mt-[31px]">When a feature is bound to this panel,</p>
        <p className="whitespace-nowrap">dragging a rectangle to select vertices on</p>
      </div>
      <VBar thumbTop="top-[102px]" thumbH="h-[40px]" />
    </div>
  </div>
);

/* ---------- feature form ---------- */
const Row = ({ label, children }) => (
  <div className="h-[60px] flex items-center">
    <div className="w-[310px] shrink-0 text-[27px] tracking-[0.4px] text-[#262626] whitespace-nowrap">{label}</div>
    {children}
  </div>
);
const TextValue = ({ value }) => (
  <div className="flex-1 h-[36px] bg-[#fafafa] flex items-center pl-[6px] text-[27px] text-black whitespace-nowrap">{value}</div>
);
const DateValue = ({ value }) => (
  <div className="flex-1 h-[47px] flex rounded-[3px] border-2 border-t-[3px] border-[#b9b9b9] bg-linear-to-b from-[#f2f2f2] to-[#e6e6e6] overflow-hidden">
    <div className="flex-1 bg-white flex items-center pl-[6px] pr-[18px] justify-between text-[27px] text-[#b4b4b4]">
      <span>{value}</span>
      <svg width="28" height="22" viewBox="0 0 28 22" className="block">
        <polygon points="7,0 28,0 28,22 7,22 0,11" fill="#dcdcdc" />
        <path d="M12 6l10 10M22 6L12 16" stroke="#fff" strokeWidth="2" />
      </svg>
    </div>
    <div className="w-[41px] shrink-0 flex items-center justify-center"><Tri size={16} color="#a0a0a0" /></div>
  </div>
);
const KV = [
  ['codeManque...', '22'],
  ['codeMesure', 'DAC'],
  ['date', '2022-01-01'],
  ['raison', 'Utilisation de semence ...'],
];
const KeyValueTable = () => (
  <div className="flex-1 flex gap-[13px] self-start mt-[6px]">
    <div className="flex flex-col gap-[12px] shrink-0">
      <div className="w-[47px] h-[45px] rounded-[3px] border-2 border-[#cfcfcf] bg-[#f2f2f2] flex items-center justify-center">
        <svg width="28" height="30" viewBox="0 0 28 30" className="block"><rect width="28" height="30" rx="5" fill="#d2d2d2" /><path d="M14 5v20M4 15h20" stroke="#fff" strokeWidth="6" /></svg>
      </div>
      <div className="w-[47px] h-[45px] rounded-[3px] border-2 border-[#cfcfcf] bg-[#f2f2f2] flex items-center justify-center">
        <svg width="28" height="30" viewBox="0 0 28 30" className="block"><rect width="28" height="30" rx="3" fill="#dfd2d2" /><path d="M5 6l18 18M23 6L5 24" stroke="#fff" strokeWidth="6" /></svg>
      </div>
    </div>
    <div className="flex-1">
      <div className="h-[32px] flex border-b-2 border-[#b5b5b5] bg-linear-to-b from-[#f6f6f6] to-[#e6e6e6] text-[22px] text-[#7c7c7c]">
        <div className="w-[198px] text-center border-r-2 border-[#d0d0d0] leading-[32px]">Key</div>
        <div className="flex-1 text-center leading-[32px]">Value</div>
      </div>
      {KV.map(([k, v]) => (
        <div key={k} className="h-[60px] flex items-center border-b-2 border-r-2 border-[#cfcfcf] text-[27px] text-[#aeaeae] whitespace-nowrap">
          <div className="w-[198px] h-full flex items-center pl-[6px] border-r-2 border-[#cfcfcf] overflow-hidden">{k}</div>
          <div className="flex-1 pl-[7px]">{v}</div>
        </div>
      ))}
    </div>
  </div>
);

const FeatureDialog = () => (
  <div className="absolute left-[2027px] top-[136px] w-[979px] h-[1414px] rounded-[16px] bg-[#ececec] border border-[#c4c4c4] shadow-[0_4px_28px_rgba(0,0,0,0.35)] overflow-hidden flex flex-col">
    <div className="relative h-[38px] shrink-0 bg-[#f6f6f8] border-b-2 border-[#d8d8d8] flex items-center justify-center text-[24.3px] text-[#3c3c3c]">
      <div className="absolute left-[10px] top-[9px] flex gap-[12px]">
        <div className="w-[18px] h-[18px] rounded-full bg-[#ee6a5f]" />
        <div className="w-[18px] h-[18px] rounded-full bg-[#f5bd4f]" />
        <div className="w-[18px] h-[18px] rounded-full bg-[#62c655]" />
      </div>
      cartobio-asp - Feature Attributes
    </div>
    <div className="flex-1 min-h-0 flex flex-col pt-[30px]">
      <div className="pl-[36px] pr-[31px]">
        <Row label="id"><TextValue value="910177" /></Row>
        <Row label="culture"><TextValue value="01.28.30.99" /></Row>
        <Row label="numerobio"><TextValue value="34857" /></Row>
        <Row label="engagement_date"><DateValue value="01/01/2022" /></Row>
        <Row label="conversion_niveau"><TextValue value="C1" /></Row>
        <Row label="surface_ha"><TextValue value="5,160125196961884" /></Row>
        <Row label="surface_m2"><TextValue value="51601,25196961884" /></Row>
        <Row label="certification_date_debut"><DateValue value="07/12/2022 16:03:50" /></Row>
        <Row label="certification_date_fin"><DateValue value="07/06/2024 16:03:50" /></Row>
        <div className="h-[397px] flex items-center">
          <div className="w-[310px] shrink-0 text-[27px] tracking-[0.4px] text-[#262626]">declassement</div>
          <KeyValueTable />
        </div>
        <div className="h-[48px] flex items-center">
          <div className="w-[310px] shrink-0 text-[27px] tracking-[0.4px] text-[#262626]">maraichage_diversifie</div>
          <div className="w-[28px] h-[28px] bg-[#f3f3f3] border-2 border-[#c6c6c6] rounded-[2px]" />
        </div>
      </div>
      <div className="flex-1" />
      <div className="mx-[18px] h-[28px] shrink-0 flex border-t-2 border-[#d2d2d2] bg-linear-to-b from-[#f0f0f0] to-[#fbfbfb]">
        <div className="w-[26px] flex items-center justify-center border-r-2 border-[#c8c8c8]"><Tri dir="left" size={16} /></div>
        <div className="flex-1" />
        <div className="w-[31px] flex items-center justify-center border-l-[5px] border-double border-[#c8c8c8]"><Tri dir="right" size={16} color="#333" /></div>
      </div>
      <div className="h-[79px] shrink-0 flex items-start justify-end gap-[13px] pt-[15px] pr-[18px]">
        <div className="w-[160px] h-[47px] rounded-[3px] border-2 border-[#a8a8a8] bg-[#f6f6f6] flex items-center justify-center text-[27px] text-black">Cancel</div>
        <div className="w-[158px] h-[47px] rounded-[3px] border-2 border-[#cccccc] bg-[#f0f0f0] flex items-center justify-center text-[27px] text-[#a4a4a4]">OK</div>
      </div>
    </div>
  </div>
);

export default function App() {
  return (
    <div className="relative w-[3006px] h-[1578px] overflow-hidden flex flex-col bg-[#ececec] font-['Liberation_Sans',Arial,sans-serif]">
      <MainToolbar />
      <SearchBar />
      <div className="flex flex-1 min-h-0">
        <div className="w-[598px] shrink-0 flex flex-col pr-[13px]">
          <BrowserPanel />
          <LayersPanel />
          <Splitter className="h-[14px]" />
          <VertexPanel />
        </div>
        <MapCanvas />
        <div className="flex-1 flex flex-col justify-end pl-[96px] pb-[15px]">
          <div className="w-[158px] h-[40px] rounded-[4px] border-2 border-[#bdbdbd]" />
        </div>
      </div>
      <FeatureDialog />
    </div>
  );
}
